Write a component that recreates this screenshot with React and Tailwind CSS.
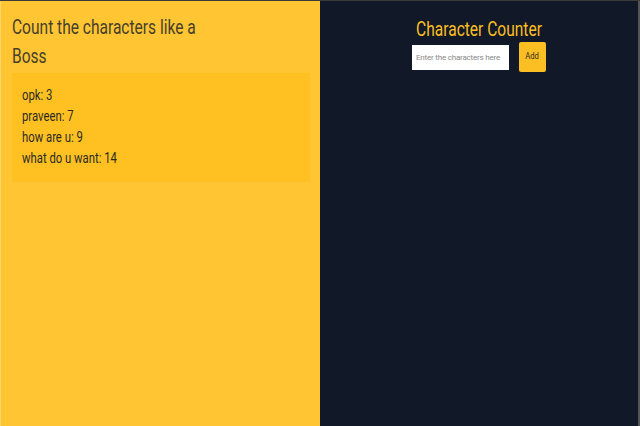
import { useState } from "react";

const App = () => {
  const [items] = useState([
    { text: "opk", count: 3 },
    { text: "praveen", count: 7 },
    { text: "how are u", count: 9 },
    { text: "what do u want", count: 14 },
  ]);

  return (
    <div className="flex h-[426px] w-[640px] border-t border-[#3a3a3a] font-['Roboto',sans-serif]">
      <div className="w-[320px] bg-[#ffc533] border-l border-[#ffd56a] pl-[11px] pr-[10px] pt-[12px]">
        <h1 className="text-[21px] leading-[29px] text-[#463f2c]">
          <span className="block w-[260px] origin-left scale-x-[0.74] whitespace-nowrap">Count the characters like a</span>
          <span className="block origin-left scale-x-[0.74]">Boss</span>
        </h1>
        <div className="mt-[2px] h-[109px] bg-[#ffc122] px-[10px] pt-[12px]">
          {items.map((item) => (
            <p key={item.text} className="text-[14.5px] leading-[21px] text-[#2b2a25]">
              <span className="inline-block origin-left scale-x-[0.78] whitespace-nowrap">
                {item.text}: {item.count}
              </span>
            </p>
          ))}
        </div>
      </div>
      <div className="flex w-[320px] flex-col items-center bg-[#111827] border-r-2 border-[#555] pt-[14px]">
        <h2 className="text-[21px] leading-[28px] text-[#fbbf24]">
          <span className="inline-block origin-center scale-x-[0.74] whitespace-nowrap">Character Counter</span>
        </h2>
        <div className="-mt-[1px] flex items-center gap-[10px]">
          <input
            type="text"
            placeholder="Enter the characters here"
            className="h-[25px] w-[97px] bg-white px-[4px] text-[8px] tracking-[-0.2px] text-gray-800 outline-none placeholder:text-[#8a8a8a]"
          />
          <button className="h-[30px] w-[27px] rounded-[2px] bg-[#fbbf24] text-[9px] text-[#2f2b20]">
            <span className="inline-block scale-x-[0.85]">Add</span>
          </button>
        </div>
      </div>
    </div>
  );
};

export default App;
